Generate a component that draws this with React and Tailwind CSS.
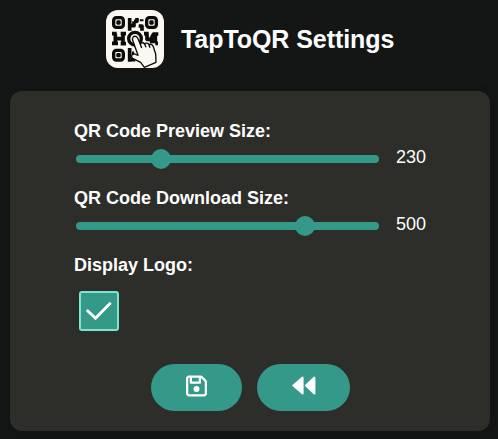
import { FaRegFloppyDisk } from "react-icons/fa6";

function Eye({ x, y }) {
  return (
    <g transform={`translate(${x} ${y})`}>
      <rect x="5" y="5" width="29" height="29" rx="8" fill="none" stroke="#0b0c0b" strokeWidth="10" />
      <rect x="13" y="13" width="13" height="13" rx="4" fill="#0b0c0b" />
    </g>
  );
}

function Logo() {
  return (
    <svg className="size-[58px] shrink-0" viewBox="0 0 174 174" aria-hidden="true">
      <rect width="174" height="174" rx="36" fill="#faf8f0" />
      <Eye x={18} y={18} />
      <Eye x={117} y={18} />
      <Eye x={18} y={116} />
      <g fill="none" stroke="#0b0c0b" strokeWidth="11" strokeLinejoin="round">
        <path d="M71 24V62M71 47H84V34M84 34H93V24M107 28V34M98 48H108V62" />
        <path d="M18 71H32M28 71V100M18 100H36M28 86H52M51 68V106M44 71H60M44 101H60" />
        <path d="M114 71H128M123 71V88H134L143 72H157M148 74V100M137 86V100M148 100H156" />
        <path d="M71 114V155M71 149H88M78 130H84" />
      </g>
      <circle cx="87" cy="86" r="19" fill="#faf8f0" stroke="#0b0c0b" strokeWidth="10" />
      <path
        d="M80 84C82 77 91 77 95 84L103 103C106 97 112 97 116 102C120 98 126 99 129 104C135 101 140 104 142 110L149 132L150 157L115 172L104 157L80 145C73 139 78 131 86 132L96 136L80 91C79 88 79 86 80 84Z"
        fill="#faf8f0"
        stroke="#0b0c0b"
        strokeWidth="4"
        strokeLinejoin="round"
      />
      <path d="M103 103L107 114M116 102L120 112M129 104L132 113" stroke="#0b0c0b" strokeWidth="4" />
    </svg>
  );
}

function SliderSetting({ label, value, thumb }) {
  return (
    <div className="h-[67px]">
      <div className="text-[18px] leading-[21px] font-bold">{label}</div>
      <div className="flex h-[33px] items-center">
        <div className="relative ml-0.5 h-2 w-[303px] rounded-full bg-[#349989]">
          <div
            className="absolute top-1/2 size-5 -translate-x-1/2 -translate-y-1/2 rounded-full bg-[#349989]"
            style={{ left: thumb }}
          />
        </div>
        <span className="-mt-0.5 ml-[17px] text-[18px] leading-[21px]">{value}</span>
      </div>
    </div>
  );
}

export default function App() {
  return (
    <div className="flex h-[439px] w-[498px] flex-col bg-[#141615] font-['Liberation_Sans',Arial,sans-serif] text-white">
      <header className="flex h-[91px] items-start pt-[10px] pl-[106px]">
        <Logo />
        <h1 className="mt-[15px] ml-[17px] text-[25px] leading-7 font-bold tracking-[-0.06px] whitespace-nowrap">
          TapToQR Settings
        </h1>
      </header>
      <main className="mr-2 ml-[10px] h-[340px] rounded-xl bg-[#2d2d2a] pt-[30px] pl-16 shadow-[0_0_10px_rgba(0,0,0,0.2)]">
        <SliderSetting label="QR Code Preview Size:" value="230" thumb={85} />
        <SliderSetting label="QR Code Download Size:" value="500" thumb={229} />
        <div className="text-[18px] leading-[21px] font-bold">Display Logo:</div>
        <div className="mt-[15px] ml-[5px] flex size-10 items-center justify-center rounded-[3px] border-2 border-[#7ce5d2] bg-[#349989]">
          <svg className="h-5 w-[26px]" viewBox="0 0 26 20" fill="none">
            <path d="M0.8 9L9.5 17.3L24.7 1.8" stroke="white" strokeWidth="2.8" />
          </svg>
        </div>
        <div className="mt-[33px] ml-[77px] flex gap-[15px]">
          <button className="flex h-[47px] w-[91px] justify-center rounded-full bg-[#349989] pt-[10px]">
            <FaRegFloppyDisk className="h-6 w-[21px]" />
          </button>
          <button className="flex h-[47px] w-[93px] justify-center rounded-full bg-[#349989] pt-[10px]">
            <svg className="size-6" viewBox="0 0 24 24" fill="currentColor" stroke="currentColor" strokeLinejoin="round" strokeWidth="2">
              <path d="M1.4 11.5L10.6 3.6V19.4ZM14 11.5L22.4 3.6V19.4Z" />
            </svg>
          </button>
        </div>
      </main>
    </div>
  );
}
